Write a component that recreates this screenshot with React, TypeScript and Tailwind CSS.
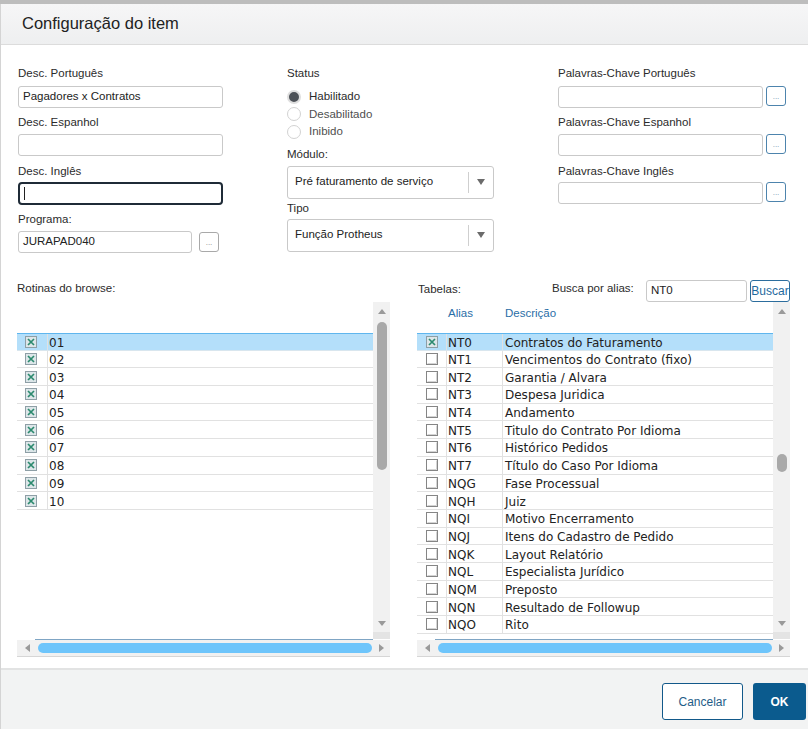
import React from "react";

type Row = { alias: string; desc: string };

const tabelas: Row[] = [
  { alias: "NT0", desc: "Contratos do Faturamento" },
  { alias: "NT1", desc: "Vencimentos do Contrato (fixo)" },
  { alias: "NT2", desc: "Garantia / Alvara" },
  { alias: "NT3", desc: "Despesa Juridica" },
  { alias: "NT4", desc: "Andamento" },
  { alias: "NT5", desc: "Titulo do Contrato Por Idioma" },
  { alias: "NT6", desc: "Histórico Pedidos" },
  { alias: "NT7", desc: "Título do Caso Por Idioma" },
  { alias: "NQG", desc: "Fase Processual" },
  { alias: "NQH", desc: "Juiz" },
  { alias: "NQI", desc: "Motivo Encerramento" },
  { alias: "NQJ", desc: "Itens do Cadastro de Pedido" },
  { alias: "NQK", desc: "Layout Relatório" },
  { alias: "NQL", desc: "Especialista Jurídico" },
  { alias: "NQM", desc: "Preposto" },
  { alias: "NQN", desc: "Resultado de Followup" },
  { alias: "NQO", desc: "Rito" },
];

const rotinas = ["01", "02", "03", "04", "05", "06", "07", "08", "09", "10"];

const Check = ({ checked }: { checked: boolean }) =>
  checked ? (
    <svg width="12" height="12" viewBox="0 0 12 12">
      <rect x="0.5" y="0.5" width="11" height="11" fill="#dde6e9" stroke="#8e9fa6" />
      <path d="M3 3 L9 9 M9 3 L3 9" stroke="#2c8a6f" strokeWidth="1.7" />
    </svg>
  ) : (
    <svg width="12" height="12" viewBox="0 0 12 12">
      <rect x="0.5" y="0.5" width="11" height="11" fill="#ffffff" stroke="#858585" />
      <path d="M1.5 10.5 H10.5 V1.5" stroke="#d4d4d4" fill="none" />
    </svg>
  );

const ArrowUp = () => (
  <svg width="8" height="5" viewBox="0 0 8 5">
    <path d="M0 5 L4 0 L8 5 Z" fill="#9a9a9a" />
  </svg>
);
const ArrowDown = () => (
  <svg width="8" height="5" viewBox="0 0 8 5">
    <path d="M0 0 L4 5 L8 0 Z" fill="#9a9a9a" />
  </svg>
);
const ArrowLeft = () => (
  <svg width="5" height="8" viewBox="0 0 5 8">
    <path d="M5 0 L0 4 L5 8 Z" fill="#9a9a9a" />
  </svg>
);
const ArrowRight = () => (
  <svg width="5" height="8" viewBox="0 0 5 8">
    <path d="M0 0 L5 4 L0 8 Z" fill="#9a9a9a" />
  </svg>
);

const Label = ({ children, className = "" }: { children: React.ReactNode; className?: string }) => (
  <div className={`h-[14px] leading-[14px] text-[11.5px] text-[#2b2b2b] ${className}`}>{children}</div>
);

const Input = ({ value = "", className = "w-[205px]" }: { value?: string; className?: string }) => (
  <div
    className={`h-[22px] border border-[#c9c9c9] rounded-[3px] bg-white pl-[4px] flex items-center text-[11.5px] text-[#222] ${className}`}
  >
    {value}
  </div>
);

const DotsButton = ({ blue = false }: { blue?: boolean }) => (
  <div
    className={`w-[20px] h-[20px] rounded-[3px] bg-white border flex items-end justify-center pb-[4px] text-[8px] leading-none ${
      blue ? "border-[#4d84ad] text-[#6f93b0]" : "border-[#a9a9a9] text-[#888]"
    }`}
  >
    ...
  </div>
);

const Radio = ({ checked, label }: { checked: boolean; label: string }) => (
  <div className="h-[17.5px] flex items-center">
    {checked ? (
      <div className="w-[14px] h-[14px] rounded-full border-[2px] border-[#dedede] bg-[#4c5157]" />
    ) : (
      <div className="w-[14px] h-[14px] rounded-full border border-[#d2d2d2] bg-white" />
    )}
    <span className={`ml-[8px] text-[11.5px] ${checked ? "text-[#2b2b2b]" : "text-[#4f4f4f]"}`}>{label}</span>
  </div>
);

const Select = ({ value }: { value: string }) => (
  <div className="w-[207px] h-[33px] border border-[#c9c9c9] rounded-[3px] bg-white flex items-center">
    <span className="pl-[7px] flex-1 text-[11.5px] text-[#222]">{value}</span>
    <div className="w-px h-[21px] bg-[#cfcfcf]" />
    <div className="w-[24px] flex justify-center">
      <svg width="8" height="6" viewBox="0 0 8 6">
        <path d="M0 0 L4 6 L8 0 Z" fill="#6b6b6b" />
      </svg>
    </div>
  </div>
);

const VScroll = ({ thumbClass }: { thumbClass: string }) => (
  <div className="w-[17px] flex flex-col">
    <div className="h-[330px] bg-[#f1f1f1] flex flex-col items-center">
      <div className="h-[18px] flex items-center">
        <ArrowUp />
      </div>
      <div className={`w-[10px] rounded-full bg-[#a9a9a9] ${thumbClass}`} />
      <div className="flex-1" />
      <div className="h-[18px] flex items-center">
        <ArrowDown />
      </div>
    </div>
    <div className="h-[7px] bg-[#e4e4e4]" />
  </div>
);

const HScroll = () => (
  <div>
    <div className="h-px ml-[18px] mr-[17px] bg-[#7fa5c4]" />
    <div className="h-[17px] bg-[#f1f1f1] border-b border-[#d6d6d6] flex items-center">
      <div className="w-[20px] flex justify-center pl-[1px]">
        <ArrowLeft />
      </div>
      <div className="w-[334px] h-[10px] ml-[1px] rounded-full bg-[#6ec5fb]" />
      <div className="flex-1 flex justify-center">
        <ArrowRight />
      </div>
    </div>
  </div>
);

const RowShell = ({ selected, children }: { selected: boolean; children: React.ReactNode }) => (
  <div
    className={`h-[17.7px] flex items-stretch font-['DejaVu_Sans',sans-serif] text-[12px] text-[#222] ${
      selected ? "bg-[#b4dffa] border-t border-t-[#5fb6ee] border-b border-b-[#d9e6ee]" : "border-b border-[#e1e1e1]"
    }`}
  >
    {children}
  </div>
);

const RotinasGrid = () => (
  <div className="w-[373px] flex flex-col">
    <div className="h-[337px] flex">
      <div className="w-[356px] flex flex-col bg-white">
        <div className="h-[31px]" />
        {rotinas.map((r, i) => (
          <RowShell key={r} selected={i === 0}>
            <div className="w-[31px] border-r border-[#e1e1e1] flex items-center justify-center pr-[2px]">
              <Check checked />
            </div>
            <div className="pl-[1px] flex items-center leading-none pt-[2px]">{r}</div>
          </RowShell>
        ))}
      </div>
      <VScroll thumbClass="mt-[2px] h-[148px]" />
    </div>
    <HScroll />
  </div>
);

const TabelasGrid = () => (
  <div className="w-[373px] flex flex-col">
    <div className="h-[337px] flex">
      <div className="w-[356px] flex flex-col bg-white overflow-hidden">
        <div className="h-[31px] shrink-0 flex text-[11.5px] text-[#2a6ea7]">
          <div className="w-[30px]" />
          <div className="w-[56px] pl-[1px] pt-[3px]">Alias</div>
          <div className="pl-[2px] pt-[3px]">Descrição</div>
        </div>
        {tabelas.map((t, i) => (
          <div key={t.alias} className="shrink-0">
            <RowShell selected={i === 0}>
              <div className="w-[30px] border-r border-[#e1e1e1] flex items-center justify-center">
                <Check checked={i === 0} />
              </div>
              <div className="w-[56px] border-r border-[#e1e1e1] pl-[1px] flex items-center leading-none pt-[2px]">
                {t.alias}
              </div>
              <div className="pl-[2px] flex items-center leading-none pt-[2px] whitespace-nowrap">{t.desc}</div>
            </RowShell>
          </div>
        ))}
      </div>
      <VScroll thumbClass="mt-[134px] h-[18px]" />
    </div>
    <HScroll />
  </div>
);

export default function App() {
  return (
    <div className="w-[808px] h-[729px] overflow-hidden bg-white font-['Liberation_Sans',Arial,sans-serif] flex flex-col">
      <div className="h-[4px] bg-[#bdbdbd] shrink-0" />
      <div className="flex-1 flex flex-col border-l border-[#d4d4d4]">
        {/* Header */}
        <div className="h-[41px] shrink-0 bg-gradient-to-b from-[#f6f6f7] to-[#eeeff0] border-b border-[#dcdcdc] flex items-center pl-[21px] pb-[1px]">
          <span className="text-[16.5px] text-[#222]">Configuração do item</span>
        </div>

        {/* Form */}
        <div className="flex pl-[17px] pt-[21px] shrink-0">
          <div className="w-[205px] flex flex-col">
            <Label>Desc. Português</Label>
            <Input value="Pagadores x Contratos" className="w-[205px] mt-[6px]" />
            <Label className="mt-[7px]">Desc. Espanhol</Label>
            <Input className="w-[205px] mt-[5px]" />
            <Label className="mt-[8px]">Desc. Inglês</Label>
            <div className="w-[205px] h-[23px] mt-[4px] border-[2px] border-[#1f2b37] rounded-[4px] bg-white flex items-center pl-[4px]">
              <div className="w-px h-[13px] bg-[#222]" />
            </div>
            <Label className="mt-[7px]">Programa:</Label>
            <div className="flex items-center mt-[5px]">
              <Input value="JURAPAD040" className="w-[174px]" />
              <div className="ml-[7px]">
                <DotsButton />
              </div>
            </div>
          </div>

          <div className="w-[207px] ml-[64px] flex flex-col">
            <Label>Status</Label>
            <div className="mt-[8px] flex flex-col">
              <Radio checked label="Habilitado" />
              <Radio checked={false} label="Desabilitado" />
              <Radio checked={false} label="Inibido" />
            </div>
            <Label className="mt-[6px]">Módulo:</Label>
            <div className="mt-[5px]">
              <Select value="Pré faturamento de serviço" />
            </div>
            <Label className="mt-[2px]">Tipo</Label>
            <div className="mt-[4px]">
              <Select value="Função Protheus" />
            </div>
          </div>

          <div className="w-[230px] ml-[64px] flex flex-col">
            <Label>Palavras-Chave Português</Label>
            <div className="flex mt-[6px]">
              <Input className="w-[205px]" />
              <div className="ml-[3px]">
                <DotsButton blue />
              </div>
            </div>
            <Label className="mt-[7px]">Palavras-Chave Espanhol</Label>
            <div className="flex mt-[5px]">
              <Input className="w-[205px]" />
              <div className="ml-[3px]">
                <DotsButton blue />
              </div>
            </div>
            <Label className="mt-[8px]">Palavras-Chave Inglês</Label>
            <div className="flex mt-[4px]">
              <Input className="w-[205px]" />
              <div className="ml-[3px]">
                <DotsButton blue />
              </div>
            </div>
          </div>
        </div>

        {/* Lists */}
        <div className="flex pl-[16px] mt-[26px] shrink-0">
          <div className="w-[373px] flex flex-col">
            <div className="h-[23px] flex items-center text-[11.5px] text-[#2b2b2b] pb-[3px]">Rotinas do browse:</div>
            <RotinasGrid />
          </div>
          <div className="w-[373px] ml-[27px] flex flex-col">
            <div className="h-[23px] flex items-center text-[11.5px] text-[#2b2b2b] whitespace-nowrap">
              <span className="w-[135px] shrink-0 pl-[1px] pb-[1px]">Tabelas:</span>
              <span className="w-[94px] shrink-0 pb-[3px]">Busca por alias:</span>
              <div className="w-[101px] shrink-0 h-[22px] border border-[#c9c9c9] rounded-[3px] flex items-center pl-[4px] text-[#222]">
                NT0
              </div>
              <div className="ml-[3px] w-[40px] shrink-0 h-[22px] border border-[#2c6d9d] rounded-[3px] flex items-center justify-center text-[12px] text-[#1f6a9e]">
                Buscar
              </div>
            </div>
            <TabelasGrid />
          </div>
        </div>

        <div className="flex-1" />

        {/* Footer */}
        <div className="h-[61px] shrink-0 bg-[#f2f3f3] border-t-[2px] border-[#e2e3e3] flex items-center justify-end pr-[2px] pt-[4px]">
          <div className="w-[81px] h-[37px] rounded-[3px] border border-[#12598a] bg-white flex items-center justify-center text-[12px] text-[#1f5d88]">
            Cancelar
          </div>
          <div className="w-[53px] h-[37px] ml-[10px] rounded-[3px] bg-[#0b5b8e] flex items-center justify-center text-[12px] font-bold text-white">
            OK
          </div>
        </div>
      </div>
    </div>
  );
}
